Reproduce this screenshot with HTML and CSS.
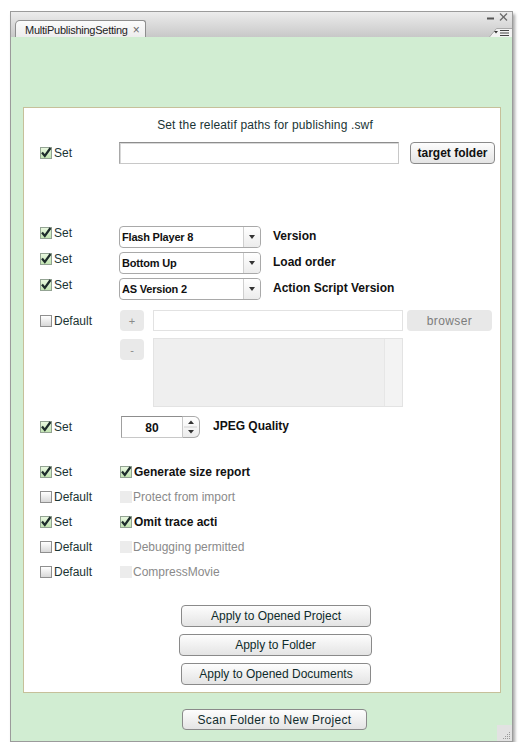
FILE: index.html
```html
<!DOCTYPE html>
<html>
<head>
<meta charset="utf-8">
<title>MultiPublishingSetting</title>
<link rel="stylesheet" href="styles.css">
</head>
<body>
<div class="window">
  <div class="titlebar">
    <div class="tab"><span class="tab-title">MultiPublishingSetting</span><span class="tab-close">&#215;</span></div>
    <svg class="controls" width="30" height="25" viewBox="0 0 30 25">
      <line x1="5" y1="6.5" x2="12" y2="6.5" stroke="#555" stroke-width="2"/>
      <line x1="18" y1="1.5" x2="25" y2="8.5" stroke="#6a6a6a" stroke-width="1.2"/>
      <line x1="25" y1="1.5" x2="18" y2="8.5" stroke="#6a6a6a" stroke-width="1.2"/>
      <path d="M7 25.5 L14.5 16.5 L31 16.5 L31 25.5 Z" fill="#f3f3f3" stroke="#a9a9a9" stroke-width="1"/>
      <path d="M12 19 L16 19 L14 21.5 Z" fill="#333"/>
      <line x1="18" y1="18.5" x2="27" y2="18.5" stroke="#444" stroke-width="1"/>
      <line x1="18" y1="21" x2="27" y2="21" stroke="#444" stroke-width="1"/>
      <line x1="18" y1="23.5" x2="27" y2="23.5" stroke="#444" stroke-width="1"/>
    </svg>
  </div>
  <div class="content">
    <div class="panel">
      <div class="heading">Set the releatif paths for publishing .swf</div>

      <div class="row row-path">
        <div class="opt"><span class="cb on"><svg width="12" height="12" viewBox="0 0 12 12"><path d="M2 5.5 L4.8 9 L10.5 1" fill="none" stroke="#1d2b2b" stroke-width="2.2"/></svg></span>Set</div>
        <span class="textbox path"></span>
        <button class="btn strong target">target folder</button>
      </div>

      <div class="row row-select first">
        <div class="opt top"><span class="cb on"><svg width="12" height="12" viewBox="0 0 12 12"><path d="M2 5.5 L4.8 9 L10.5 1" fill="none" stroke="#1d2b2b" stroke-width="2.2"/></svg></span>Set</div>
        <div class="select"><span class="select-text">Flash Player 8</span><span class="select-arrow"><svg width="6" height="4" viewBox="0 0 6 4"><path d="M0 0 L6 0 L3 4 Z" fill="#333"/></svg></span></div>
        <span class="side-label">Version</span>
      </div>
      <div class="row row-select">
        <div class="opt top"><span class="cb on"><svg width="12" height="12" viewBox="0 0 12 12"><path d="M2 5.5 L4.8 9 L10.5 1" fill="none" stroke="#1d2b2b" stroke-width="2.2"/></svg></span>Set</div>
        <div class="select"><span class="select-text">Bottom Up</span><span class="select-arrow"><svg width="6" height="4" viewBox="0 0 6 4"><path d="M0 0 L6 0 L3 4 Z" fill="#333"/></svg></span></div>
        <span class="side-label">Load order</span>
      </div>
      <div class="row row-select">
        <div class="opt top"><span class="cb on"><svg width="12" height="12" viewBox="0 0 12 12"><path d="M2 5.5 L4.8 9 L10.5 1" fill="none" stroke="#1d2b2b" stroke-width="2.2"/></svg></span>Set</div>
        <div class="select"><span class="select-text">AS Version 2</span><span class="select-arrow"><svg width="6" height="4" viewBox="0 0 6 4"><path d="M0 0 L6 0 L3 4 Z" fill="#333"/></svg></span></div>
        <span class="side-label">Action Script Version</span>
      </div>

      <div class="row row-classpath">
        <div class="opt"><span class="cb"></span>Default</div>
        <span class="mini-btn">+</span>
        <span class="textbox dis-input"></span>
        <span class="btn-dis">browser</span>
      </div>
      <div class="row row-list">
        <div class="opt"></div>
        <span class="mini-btn">-</span>
        <div class="listbox"><div class="list-area"></div><div class="list-scroll"></div></div>
      </div>

      <div class="row row-jpeg">
        <div class="opt"><span class="cb on"><svg width="12" height="12" viewBox="0 0 12 12"><path d="M2 5.5 L4.8 9 L10.5 1" fill="none" stroke="#1d2b2b" stroke-width="2.2"/></svg></span>Set</div>
        <div class="stepper">
          <span class="stepper-input">80</span>
          <span class="stepper-arrows"><svg width="16" height="20" viewBox="0 0 16 20"><path d="M5 7 L11 7 L8 3.5 Z" fill="#333"/><path d="M5 13 L11 13 L8 16.5 Z" fill="#333"/><line x1="1" y1="10" x2="14" y2="10" stroke="#d0d0d0" stroke-width="1"/></svg></span>
        </div>
        <span class="side-label jpeg">JPEG Quality</span>
      </div>

      <div class="checks">
        <div class="row row-check">
          <div class="opt"><span class="cb on"><svg width="12" height="12" viewBox="0 0 12 12"><path d="M2 5.5 L4.8 9 L10.5 1" fill="none" stroke="#1d2b2b" stroke-width="2.2"/></svg></span>Set</div>
          <div class="check-item strong"><span class="cb on"><svg width="12" height="12" viewBox="0 0 12 12"><path d="M2 5.5 L4.8 9 L10.5 1" fill="none" stroke="#1d2b2b" stroke-width="2.2"/></svg></span>Generate size report</div>
        </div>
        <div class="row row-check">
          <div class="opt"><span class="cb"></span>Default</div>
          <div class="check-item dis"><span class="cb off"></span>Protect from import</div>
        </div>
        <div class="row row-check">
          <div class="opt"><span class="cb on"><svg width="12" height="12" viewBox="0 0 12 12"><path d="M2 5.5 L4.8 9 L10.5 1" fill="none" stroke="#1d2b2b" stroke-width="2.2"/></svg></span>Set</div>
          <div class="check-item strong"><span class="cb on"><svg width="12" height="12" viewBox="0 0 12 12"><path d="M2 5.5 L4.8 9 L10.5 1" fill="none" stroke="#1d2b2b" stroke-width="2.2"/></svg></span>Omit trace acti</div>
        </div>
        <div class="row row-check">
          <div class="opt"><span class="cb"></span>Default</div>
          <div class="check-item dis"><span class="cb off"></span>Debugging permitted</div>
        </div>
        <div class="row row-check">
          <div class="opt"><span class="cb"></span>Default</div>
          <div class="check-item dis"><span class="cb off"></span>CompressMovie</div>
        </div>
      </div>

      <div class="actions">
        <button class="btn action">Apply to Opened Project</button>
        <button class="btn action wide">Apply to Folder</button>
        <button class="btn action">Apply to Opened Documents</button>
      </div>
    </div>
    <div class="footer">
      <button class="btn scan">Scan Folder to New Project</button>
    </div>
    <span class="grip"><svg width="14" height="14" viewBox="0 0 14 14"><g fill="#9a9a9a"><rect x="11" y="5" width="1" height="1"/><rect x="9" y="7" width="1" height="1"/><rect x="11" y="7" width="1" height="1"/><rect x="7" y="9" width="1" height="1"/><rect x="9" y="9" width="1" height="1"/><rect x="11" y="9" width="1" height="1"/><rect x="5" y="11" width="1" height="1"/><rect x="7" y="11" width="1" height="1"/><rect x="9" y="11" width="1" height="1"/><rect x="11" y="11" width="1" height="1"/></g></svg></span>
  </div>
</div>
</body>
</html>
```

FILE: styles.css
```css
* { box-sizing: border-box; }

body {
  margin: 0;
  background: #ffffff;
  font-family: "Liberation Sans", Arial, sans-serif;
  font-size: 12px;
  color: #1b3434;
}

.window {
  margin: 11px 0 0 10px;
  width: 503px;
  height: 731px;
  border: 1px solid #9b9b9b;
  box-shadow: 2px 3px 3px rgba(0, 0, 0, 0.35);
  display: flex;
  flex-direction: column;
  background: #d1edd2;
}

.titlebar {
  height: 25px;
  flex: none;
  background: linear-gradient(#ececec, #c8c8c8);
  display: flex;
  justify-content: space-between;
  align-items: flex-end;
}

.tab {
  margin-left: 4px;
  width: 131px;
  height: 17px;
  border: 1px solid #8e8e8e;
  border-bottom: none;
  border-radius: 5px 3px 0 0;
  background: linear-gradient(#fbfbfb, #ededed);
  display: flex;
  align-items: center;
  padding-left: 9px;
  padding-top: 1px;
  font-size: 11px;
  letter-spacing: -0.25px;
  color: #222;
}

.tab-close {
  margin-left: 5px;
  font-size: 12px;
  color: #666;
}

.controls {
  display: block;
  flex: none;
}

.content {
  flex: 1;
  position: relative;
  padding: 70px 11px 0 12px;
  display: flex;
  flex-direction: column;
}

.panel {
  height: 586px;
  flex: none;
  background: #ffffff;
  border: 1px solid #c6c09a;
  display: flex;
  flex-direction: column;
}

.heading {
  margin-top: 10px;
  height: 14px;
  line-height: 14px;
  padding-left: 6px;
  text-align: center;
  color: #1a3434;
  letter-spacing: 0.15px;
}

.row {
  display: flex;
  align-items: center;
  padding-left: 16px;
}

.opt {
  width: 79px;
  flex: none;
  display: flex;
  align-items: center;
  color: #1b3434;
}

.opt.top {
  align-self: flex-start;
  margin-top: 1px;
  height: 12px;
}

.cb {
  width: 12px;
  height: 12px;
  flex: none;
  margin-right: 2px;
  border: 1px solid #8f8f8f;
  background: linear-gradient(#ffffff, #d8d8d8);
  position: relative;
}

.cb.on {
  border-color: #93a393;
  background: linear-gradient(#e8f7df, #c2e4b2);
}

.cb svg {
  position: absolute;
  left: -1px;
  top: -1px;
}

.cb.off {
  border: none;
  background: #ececec;
  margin-right: 1px;
}

.row-path {
  margin-top: 10px;
  height: 22px;
}

.textbox {
  display: block;
  background: #fff;
}

.path {
  width: 280px;
  height: 22px;
  border: 1px solid #c8c8c8;
  border-top-color: #8d8d8d;
  border-left-color: #a8a8a8;
  box-shadow: inset 1px 1px 0 #d8d8d8;
}

.btn {
  font-family: "Liberation Sans", Arial, sans-serif;
  font-size: 12px;
  color: #0f2b2b;
  border: 1px solid #8a8a8a;
  border-radius: 4px;
  background: linear-gradient(#fdfdfd, #e4e4e4);
  padding: 0;
  height: 22px;
}

.strong {
  font-weight: bold;
  color: #111;
}

.target {
  margin-left: 11px;
  width: 85px;
}

.row-select {
  margin-top: 4px;
  height: 22px;
}

.row-select.first {
  margin-top: 62px;
}

.select {
  width: 142px;
  height: 22px;
  display: flex;
  border: 1px solid #a9a9a9;
  border-radius: 4px;
  background: #fff;
}

.select-text {
  flex: 1;
  padding-left: 2px;
  font-size: 11px;
  font-weight: bold;
  color: #111;
  line-height: 20px;
  letter-spacing: -0.2px;
}

.select-arrow {
  width: 17px;
  border-left: 1px solid #cfcfcf;
  border-radius: 0 4px 4px 0;
  background: linear-gradient(#ffffff, #ececec);
  display: flex;
  align-items: center;
  justify-content: center;
}

.side-label {
  margin-left: 12px;
  font-weight: bold;
  color: #111;
  margin-top: -2px;
}

.row-classpath {
  margin-top: 10px;
  height: 21px;
}

.mini-btn {
  width: 24px;
  height: 21px;
  margin-left: 1px;
  border-radius: 4px;
  background: #e9e9e9;
  color: #8a8a8a;
  font-size: 11px;
  display: flex;
  align-items: center;
  justify-content: center;
}

.dis-input {
  margin-left: 9px;
  width: 250px;
  height: 21px;
  border: 1px solid #e2e2e2;
}

.btn-dis {
  margin-left: 4px;
  width: 85px;
  height: 21px;
  border-radius: 4px;
  background: #e8e8e8;
  color: #7c7c7c;
  letter-spacing: 0.4px;
  display: flex;
  align-items: center;
  justify-content: center;
}

.row-list {
  margin-top: 7px;
  height: 69px;
  align-items: flex-start;
}

.row-list .mini-btn {
  margin-top: 1px;
}

.listbox {
  margin-left: 9px;
  width: 250px;
  height: 69px;
  border: 1px solid #e3e3e3;
  background: #efefef;
  display: flex;
}

.list-area {
  flex: 1;
}

.list-scroll {
  width: 18px;
  border-left: 1px solid #e6e6e6;
  background: #f3f3f3;
}

.row-jpeg {
  margin-top: 9px;
  height: 22px;
}

.stepper {
  margin-left: 2px;
  display: flex;
}

.stepper-input {
  width: 62px;
  height: 22px;
  border: 1px solid #c8c8c8;
  border-top-color: #8d8d8d;
  border-left-color: #a0a0a0;
  background: #fff;
  font-weight: bold;
  color: #111;
  display: flex;
  align-items: center;
  justify-content: center;
  padding-top: 1px;
}

.stepper-arrows {
  width: 17px;
  height: 22px;
  border: 1px solid #aaaaaa;
  border-left: none;
  border-radius: 0 6px 6px 0;
  background: linear-gradient(#ffffff, #ececec);
  display: flex;
  align-items: center;
}

.side-label.jpeg {
  margin-left: 13px;
}

.checks {
  margin-top: 21px;
  display: flex;
  flex-direction: column;
}

.row-check {
  height: 25px;
}

.check-item {
  display: flex;
  align-items: center;
  margin-left: 1px;
}

.check-item.dis {
  color: #8a8a8a;
}

.actions {
  margin-top: 21px;
  padding-left: 157px;
  display: flex;
  flex-direction: column;
  gap: 7px;
}

.action {
  width: 190px;
  height: 22px;
}

.action.wide {
  width: 193px;
  margin-left: -2px;
}

.footer {
  flex: 1;
  padding-top: 16px;
  padding-left: 159px;
}

.scan {
  width: 185px;
  height: 21px;
  letter-spacing: 0.3px;
}

.grip {
  position: absolute;
  right: 0;
  bottom: 0;
  width: 15px;
  height: 16px;
  background: #e2e2e2;
  display: flex;
  align-items: flex-end;
  justify-content: flex-end;
}
```
